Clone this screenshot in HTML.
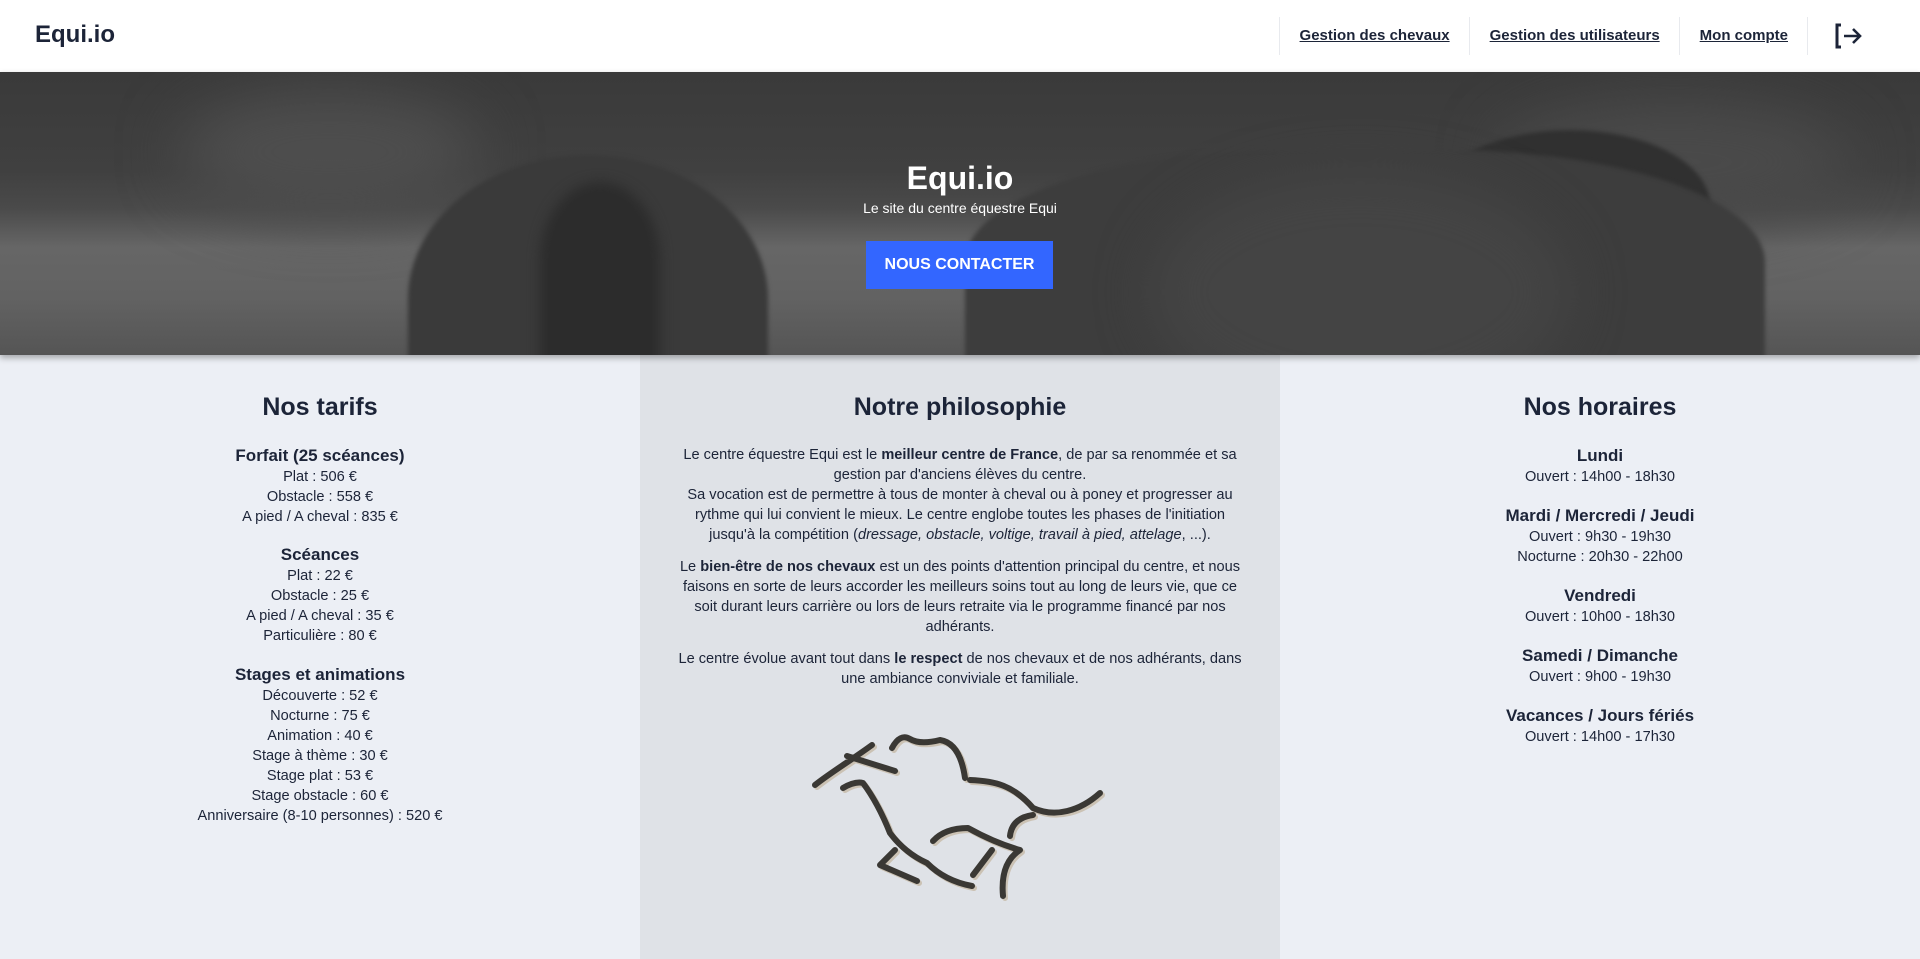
<!DOCTYPE html>
<html><head><meta charset="utf-8">
<style>
*{margin:0;padding:0;box-sizing:border-box}
body{width:1920px;height:959px;overflow:hidden;font-family:"Liberation Sans",sans-serif;color:#1c2438;background:#eceff5}
nav{height:72px;background:#fff;position:relative}
.logo{position:absolute;left:35px;top:21px;font-size:24px;font-weight:bold;color:#1c2438}
.links{position:absolute;right:0;top:17px;height:38px;display:flex;align-items:center}
.links a{font-size:15px;font-weight:bold;color:#1c2438;text-decoration:underline;padding:0 19px 0 20px;height:38px;line-height:38px;border-left:1px solid #e8eaee}
.links .ic{border-left:1px solid #e8eaee;height:38px;width:113px;display:flex;align-items:center;padding-left:26px}
.hero{position:relative;height:283px;overflow:hidden;background:linear-gradient(#3a3a3a 0%,#404040 35%,#4a4a4a 48%,#666 62%,#626262 80%,#555 100%);box-shadow:0 3px 6px rgba(0,0,0,.3);z-index:2}
.b{position:absolute}
.hero .t{position:absolute;left:0;right:0;text-align:center;color:#fff}
.btn{position:absolute;left:866px;top:169px;width:187px;height:48px;background:#3366ff;color:#fff;font-weight:bold;font-size:16px;line-height:48px;text-align:center}
.cols{display:flex;height:604px}
.col{width:640px;text-align:center;font-size:14.6px;line-height:20px}
.mid{background:#dfe2e7}
h2{font-size:25px;margin-top:36px;margin-bottom:22px;line-height:32px}
h3{font-size:17px;line-height:22px;margin-top:10px}
.mid p{width:568px;margin:0 auto 12px}
</style></head><body>
<nav><div class="logo">Equi.io</div>
<div class="links"><a>Gestion des chevaux</a><a>Gestion des utilisateurs</a><a>Mon compte</a>
<div class="ic"><svg width="30" height="26" viewBox="0 0 30 26"><path d="M7 2H3v22h4" fill="none" stroke="#1c2438" stroke-width="3"/><path d="M10 13h15M19 6l7 7-7 7" fill="none" stroke="#1c2438" stroke-width="2.6"/></svg></div></div></nav>
<div class="hero">
<div class="b" style="left:180px;top:20px;width:300px;height:120px;background:#4e4e4e;border-radius:50%;filter:blur(30px)"></div>
<div class="b" style="left:1500px;top:30px;width:350px;height:120px;background:#4a4a4a;border-radius:50%;filter:blur(30px)"></div>
<div class="b" style="left:408px;top:83px;width:360px;height:320px;background:#3a3a3a;border-radius:50% 50% 0 0/45% 45% 0 0;filter:blur(2px)"></div>
<div class="b" style="left:540px;top:110px;width:120px;height:260px;background:#2c2c2c;border-radius:50% 50% 0 0/30% 30% 0 0;filter:blur(6px)"></div>
<div class="b" style="left:1430px;top:58px;width:280px;height:300px;background:#303030;border-radius:50% 50% 0 0/25% 25% 0 0;filter:blur(2px)"></div>
<div class="b" style="left:965px;top:78px;width:800px;height:320px;background:#3d3d3d;border-radius:40% 40% 0 0/35% 35% 0 0;filter:blur(2px)"></div>
<div class="b" style="left:1150px;top:100px;width:420px;height:240px;background:#444;border-radius:50%;filter:blur(25px)"></div>
<div class="t" style="top:88px;font-size:32px;font-weight:bold">Equi.io</div>
<div class="t" style="top:128px;font-size:14px">Le site du centre équestre Equi</div>
<div class="btn">NOUS CONTACTER</div>
</div>
<div class="cols">
<div class="col">
<h2>Nos tarifs</h2>
<h3>Forfait (25 scéances)</h3><div>Plat : 506 €</div><div>Obstacle : 558 €</div><div>A pied / A cheval : 835 €</div>
<h3 style="margin-top:17px">Scéances</h3><div>Plat : 22 €</div><div>Obstacle : 25 €</div><div>A pied / A cheval : 35 €</div><div>Particulière : 80 €</div>
<h3 style="margin-top:18px">Stages et animations</h3><div>Découverte : 52 €</div><div>Nocturne : 75 €</div><div>Animation : 40 €</div><div>Stage à thème : 30 €</div><div>Stage plat : 53 €</div><div>Stage obstacle : 60 €</div><div>Anniversaire (8-10 personnes) : 520 €</div>
</div>
<div class="col mid">
<h2>Notre philosophie</h2>
<p style="margin-top:19px">Le centre équestre Equi est le <b>meilleur centre de France</b>, de par sa renommée et sa gestion par d'anciens élèves du centre.<br>Sa vocation est de permettre à tous de monter à cheval ou à poney et progresser au rythme qui lui convient le mieux. Le centre englobe toutes les phases de l'initiation jusqu'à la compétition (<i>dressage, obstacle, voltige, travail à pied, attelage</i>, ...).</p>
<p>Le <b>bien-être de nos chevaux</b> est un des points d'attention principal du centre, et nous faisons en sorte de leurs accorder les meilleurs soins tout au long de leurs vie, que ce soit durant leurs carrière ou lors de leurs retraite via le programme financé par nos adhérants.</p>
<p>Le centre évolue avant tout dans <b>le respect</b> de nos chevaux et de nos adhérants, dans une ambiance conviviale et familiale.</p>
<svg width="350" height="220" viewBox="0 0 350 220" style="display:block;margin:14px 0 0 140px">
<g fill="none" stroke-linecap="round" stroke-linejoin="round" stroke-width="6">
<g stroke="#cbc2b4" transform="translate(2,2)">
<path d="M35 82C50 70 70 58 92 42M67 53L115 68M63 85Q75 78 83 80Q98 100 110 130Q125 150 147 160Q165 178 192 183M115 147L100 162L137 178M112 45Q120 30 130 36Q140 42 160 37Q180 40 185 75M190 77C215 78 233 82 253 105C275 115 300 108 320 90M153 138Q165 125 188 125Q215 140 240 147Q220 160 223 193M253 112Q232 115 230 133M212 147L193 172"/></g>
<g stroke="#3a3834">
<path d="M35 82C50 70 70 58 92 42M67 53L115 68M63 85Q75 78 83 80Q98 100 110 130Q125 150 147 160Q165 178 192 183M115 147L100 162L137 178M112 45Q120 30 130 36Q140 42 160 37Q180 40 185 75M190 77C215 78 233 82 253 105C275 115 300 108 320 90M153 138Q165 125 188 125Q215 140 240 147Q220 160 223 193M253 112Q232 115 230 133M212 147L193 172"/></g></g></svg>
</div>
<div class="col">
<h2>Nos horaires</h2>
<h3>Lundi</h3><div>Ouvert : 14h00 - 18h30</div>
<h3 style="margin-top:18px">Mardi / Mercredi / Jeudi</h3><div>Ouvert : 9h30 - 19h30</div><div>Nocturne : 20h30 - 22h00</div>
<h3 style="margin-top:18px">Vendredi</h3><div>Ouvert : 10h00 - 18h30</div>
<h3 style="margin-top:18px">Samedi / Dimanche</h3><div>Ouvert : 9h00 - 19h30</div>
<h3 style="margin-top:18px">Vacances / Jours fériés</h3><div>Ouvert : 14h00 - 17h30</div>
</div>
</div>
</body></html>
